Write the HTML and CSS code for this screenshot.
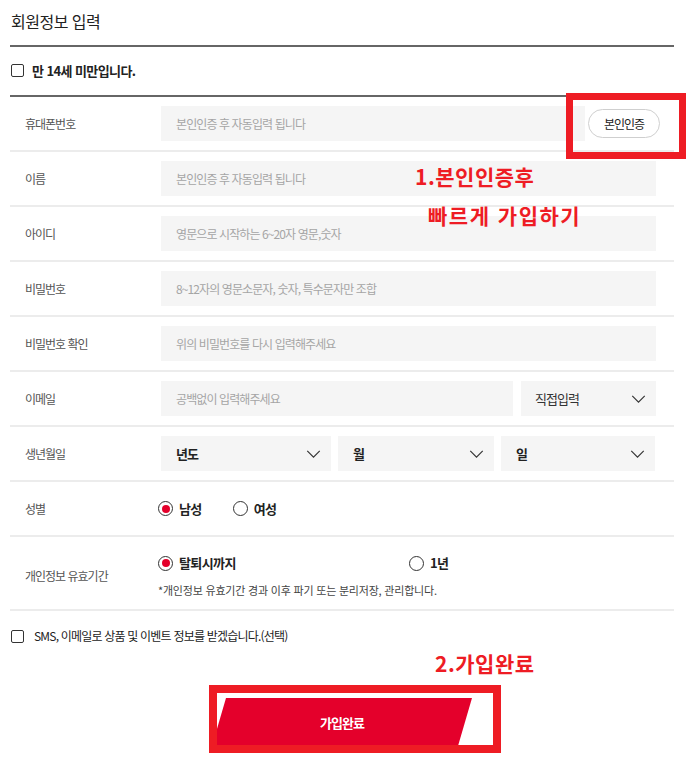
FILE: index.html
```html
<!DOCTYPE html>
<html lang="ko">
<head>
<meta charset="utf-8">
<title>회원정보 입력</title>
<link rel="stylesheet" href="styles.css">
</head>
<body>
<div class="page">
  <form class="form">
    <h2 class="title">회원정보 입력</h2>
    <div class="age-row">
      <span class="check"></span>
      <span class="age-text">만 14세 미만입니다.</span>
    </div>

    <div class="row">
      <div class="label">휴대폰번호</div>
      <div class="field field-phone">
        <div class="input placeholder">본인인증 후 자동입력 됩니다</div>
        <button type="button" class="verify">본인인증</button>
      </div>
    </div>
    <div class="row">
      <div class="label">이름</div>
      <div class="field"><div class="input placeholder">본인인증 후 자동입력 됩니다</div></div>
    </div>
    <div class="row">
      <div class="label">아이디</div>
      <div class="field"><div class="input placeholder">영문으로 시작하는 6~20자 영문,숫자</div></div>
    </div>
    <div class="row">
      <div class="label">비밀번호</div>
      <div class="field"><div class="input placeholder">8~12자의 영문소문자, 숫자, 특수문자만 조합</div></div>
    </div>
    <div class="row">
      <div class="label">비밀번호 확인</div>
      <div class="field"><div class="input placeholder">위의 비밀번호를 다시 입력해주세요</div></div>
    </div>
    <div class="row">
      <div class="label">이메일</div>
      <div class="field field-email">
        <div class="input placeholder">공백없이 입력해주세요</div>
        <div class="select select-light">직접입력<svg class="chev" viewBox="0 0 16 9"><path d="M1 1l7 7 7-7"/></svg></div>
      </div>
    </div>
    <div class="row">
      <div class="label">생년월일</div>
      <div class="field field-birth">
        <div class="select">년도<svg class="chev" viewBox="0 0 16 9"><path d="M1 1l7 7 7-7"/></svg></div>
        <div class="select">월<svg class="chev" viewBox="0 0 16 9"><path d="M1 1l7 7 7-7"/></svg></div>
        <div class="select">일<svg class="chev" viewBox="0 0 16 9"><path d="M1 1l7 7 7-7"/></svg></div>
      </div>
    </div>
    <div class="row">
      <div class="label">성별</div>
      <div class="field radios">
        <span class="opt"><span class="radio on"></span>남성</span>
        <span class="opt"><span class="radio"></span>여성</span>
      </div>
    </div>
    <div class="row row-privacy">
      <div class="label">개인정보 유효기간</div>
      <div class="privacy">
        <div class="radios privacy-opts">
          <span class="opt opt-wide"><span class="radio on"></span>탈퇴시까지</span>
          <span class="opt"><span class="radio"></span>1년</span>
        </div>
        <p class="note">*개인정보 유효기간 경과 이후 파기 또는 분리저장, 관리합니다.</p>
      </div>
    </div>
    <div class="sms-row">
      <span class="check"></span>
      <span class="sms-text">SMS, 이메일로 상품 및 이벤트 정보를 받겠습니다.(선택)</span>
    </div>
    <div class="submit-wrap">
      <button type="button" class="submit">가입완료</button>
    </div>
  </form>

  <div class="mark mark-verify"></div>
  <div class="note-red note-1">1.본인인증후</div>
  <div class="note-red note-2">빠르게 가입하기</div>
  <div class="note-red note-3">2.가입완료</div>
  <div class="mark mark-submit"></div>
</div>
</body>
</html>
```

FILE: styles.css
```css
* { box-sizing: border-box; }
html, body { margin: 0; padding: 0; background: #fff; }
body {
  font-family: "Noto Sans CJK KR", "Noto Sans", sans-serif;
  color: #222;
  letter-spacing: -1px;
}
.page { position: relative; width: 695px; min-height: 762px; }
.form { margin-left: 10px; width: 664px; }

.title {
  margin: 0;
  height: 47px;
  padding-bottom: 4px;
  padding-left: 1px;
  display: flex;
  align-items: center;
  font-size: 16px;
  font-weight: normal;
  letter-spacing: -0.5px;
  color: #222;
  border-bottom: 2px solid #666;
}

.age-row {
  height: 50px;
  display: flex;
  align-items: center;
  border-bottom: 2px solid #666;
  padding-bottom: 1px;
}
.check {
  width: 13px;
  height: 13px;
  border: 1px solid #333;
  border-radius: 2px;
  margin-left: 1px;
  flex: none;
}
.age-text { margin-left: 8px; font-size: 13px; font-weight: bold; color: #222; line-height: 20px; letter-spacing: -0.6px; }

.row {
  display: grid;
  grid-template-columns: 151px 1fr;
  align-items: center;
  padding: 9px 18px 9px 0;
  border-bottom: 2px solid #ececec;
}
.label {
  padding-left: 15px;
  font-size: 12px;
  color: #555;
  line-height: 20px;
}
.field { display: flex; align-items: center; height: 35px; }
.input {
  flex: 1;
  height: 35px;
  background: #f5f5f5;
  padding-left: 15px;
  display: flex;
  align-items: center;
  font-size: 12px;
  letter-spacing: -0.9px;
}
.placeholder { color: #a5a5a5; }

.field-phone .input { flex: none; width: 424px; }
.verify {
  margin-left: 3px;
  margin-right: -4px;
  width: 72px;
  height: 29px;
  border: 1px solid #cfcfcf;
  border-radius: 15px;
  background: #fff;
  font-family: inherit;
  font-size: 12px;
  letter-spacing: -1px;
  color: #222;
  padding: 0;
}

.field-email .input { flex: none; width: 352px; }
.field-email .select { margin-left: 8px; flex: 1; }

.select {
  height: 35px;
  background: #f5f5f5;
  display: flex;
  align-items: center;
  justify-content: space-between;
  padding: 0 10px 0 15px;
  font-size: 13px;
  font-weight: bold;
  color: #222;
}
.select-light { font-weight: normal; color: #333; padding-left: 14px; }
.chev { width: 15px; height: 8px; fill: none; stroke: #333; stroke-width: 1.3; }

.field-birth { display: grid; grid-template-columns: 170px 156px 154px; column-gap: 7px; }

.radios { display: flex; align-items: center; margin-left: -3px; }
.opt {
  display: flex;
  align-items: center;
  font-size: 13px;
  font-weight: bold;
  color: #222;
  line-height: 20px;
  letter-spacing: -0.6px;
  margin-right: 31px;
}
.radio {
  width: 15px;
  height: 15px;
  border: 1px solid #333;
  border-radius: 50%;
  margin-right: 6px;
  display: flex;
  align-items: center;
  justify-content: center;
  flex: none;
}
.radio.on::after {
  content: "";
  width: 8px;
  height: 8px;
  border-radius: 50%;
  background: #e4002b;
}
.opt-wide { width: 251px; margin-right: 0; }

.row-privacy { padding-top: 16px; padding-bottom: 11px; }
.privacy-opts { height: 20px; }
.note {
  margin: 9px 0 0 -3px;
  font-size: 11px;
  line-height: 16px;
  color: #444;
  letter-spacing: -0.2px;
}

.sms-row {
  display: flex;
  align-items: center;
  height: 20px;
  margin-top: 15px;
}
.sms-text { margin-left: 10px; font-size: 12px; color: #222; line-height: 20px; letter-spacing: -0.8px; }

.submit-wrap { display: flex; justify-content: center; margin-top: 52px; }
.submit {
  width: 260px;
  height: 48px;
  border: 0;
  padding: 0;
  background: #e4002b;
  color: #fff;
  font-family: inherit;
  font-size: 13px;
  font-weight: bold;
  letter-spacing: -1px;
  clip-path: polygon(14px 0, 100% 0, calc(100% - 14px) 100%, 0 100%);
}

.mark { position: absolute; border: 7px solid #ee1c24; }
.mark-verify { left: 566px; top: 93px; width: 120px; height: 66px; }
.mark-submit { left: 209px; top: 685px; width: 292px; height: 68px; border-width: 8px; }

.note-red {
  position: absolute;
  font-size: 21px;
  font-weight: bold;
  color: #ee1c24;
  line-height: 24px;
  letter-spacing: 0.5px;
}
.note-1 { left: 415px; top: 164px; }
.note-2 { left: 428px; top: 203px; letter-spacing: 1.5px; }
.note-3 { left: 435px; top: 651px; }
```
